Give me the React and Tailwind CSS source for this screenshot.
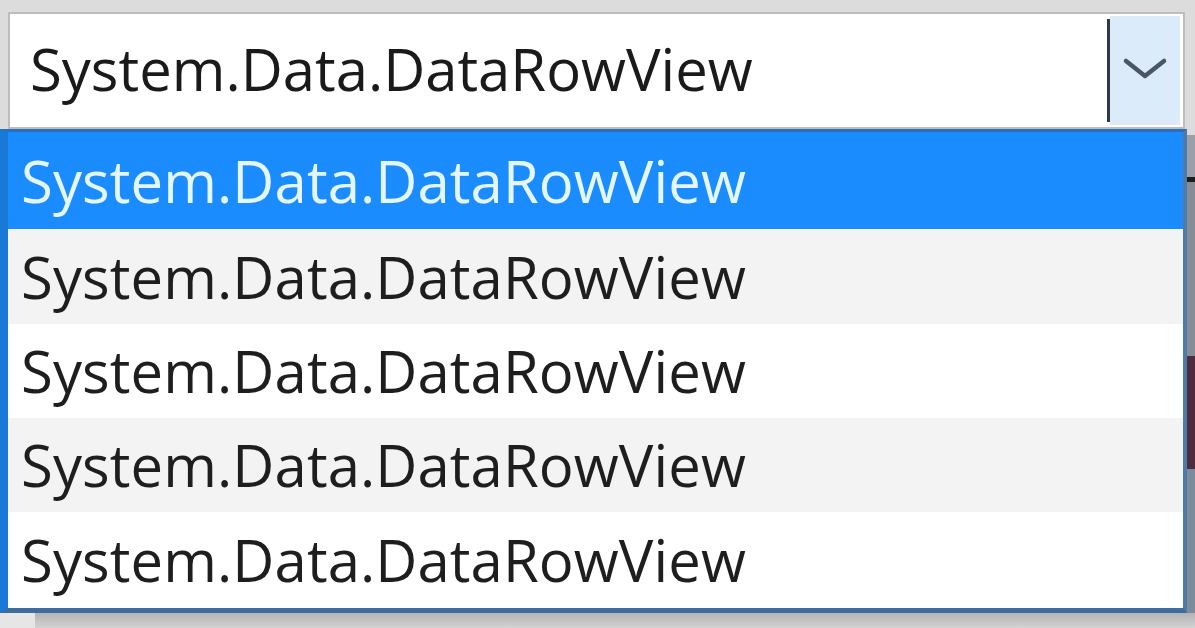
import React from 'react'

const rows = [
  { h: 'h-[97px]', bg: 'bg-[#1b8cfd]', text: 'text-[#e4f6ff]' },
  { h: 'h-[95px]', bg: 'bg-[#f3f3f3]', text: 'text-[#1e1e1e]' },
  { h: 'h-[94px]', bg: 'bg-white', text: 'text-[#1e1e1e]' },
  { h: 'h-[94px]', bg: 'bg-[#f3f3f3]', text: 'text-[#1e1e1e]' },
  { h: 'h-[96px]', bg: 'bg-white', text: 'text-[#1e1e1e]' },
]

function Chevron() {
  return (
    <svg width="46" height="26" viewBox="0 0 46 26" fill="none">
      <polyline points="4,5 23,20 42,5" stroke="#4b5664" strokeWidth="4.5" strokeLinejoin="round" strokeLinecap="round" />
    </svg>
  )
}

export default function App() {
  return (
    <div
      className="w-[1195px] h-[628px] overflow-hidden bg-[#d6d6d6] flex flex-col"
      style={{ fontFamily: '"Open Sans", "Noto Sans", sans-serif' }}
    >
      {/* combo box */}
      <div className="h-[12px] bg-[#dcdcdc]" />
      <div className="flex bg-[#dcdcdc]">
        <div className="ml-[8px] w-[1177px] h-[117px] border-2 border-[#bdbdbd] bg-white flex items-stretch">
          <div className="flex-1 flex items-center pl-[20px] pb-[3px] text-[58px] leading-none text-[#1a1a1a]">
            System.Data.DataRowView
          </div>
          <div className="w-[3px] my-[5px] bg-[#2b3b4c]" />
          <div className="w-[70px] my-[2px] mr-[3px] bg-[#dcebf9] flex items-center justify-center pb-[4px]">
            <Chevron />
          </div>
        </div>
      </div>

      {/* dropdown list */}
      <div className="flex">
        <div className="w-[1187px] border-l-[8px] border-l-[#1a78d6] border-t-[3px] border-t-[#2b6fb6] border-r-[4px] border-r-[#4f7aa6] border-b-[5px] border-b-[#3d6d9c] flex flex-col">
          {rows.map((r, i) => (
            <div key={i} className={`${r.h} ${r.bg} ${r.text} flex items-center pl-[13px] text-[58px] leading-none tracking-[0.1px]`}>
              System.Data.DataRowView
            </div>
          ))}
        </div>
        <div className="flex-1 flex flex-col">
          <div className="h-[6px] bg-[#dcdcdc]" />
          <div className="h-[42px] bg-[#9aa0a8]" />
          <div className="h-[5px] bg-[#1c1c1c]" />
          <div className="h-[174px] bg-[#858d97]" />
          <div className="h-[113px] bg-[#4e2c40]" />
          <div className="flex-1 bg-[#7d8c9c]" />
        </div>
      </div>

      {/* shadow under list */}
      <div className="flex-1 flex">
        <div className="w-[35px] bg-[#e6e6e6]" />
        <div className="flex-1 bg-gradient-to-b from-[#b4b4b4] to-[#d2d2d2]" />
      </div>
    </div>
  )
}
